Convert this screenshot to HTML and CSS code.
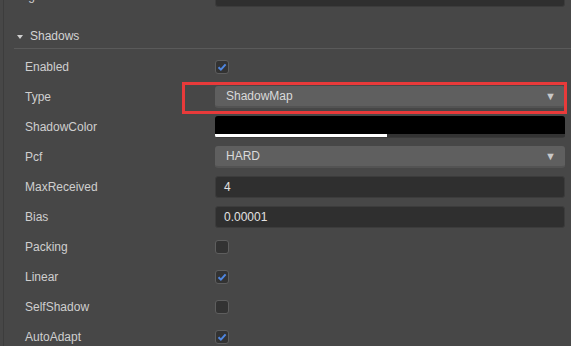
FILE: index.html
```html
<!DOCTYPE html>
<html lang="en">
<head>
    <meta charset="UTF-8">
    <title>Shadows</title>
    <link rel="stylesheet" href="styles.css">
</head>
<body>
    <div class="panel">
        <!-- 上一个属性（被裁切） -->
        <div class="row prev-row">
            <span class="label">Ignore</span>
            <div class="input"></div>
        </div>

        <div class="section-header">
            <span class="caret"></span>
            <span>Shadows</span>
        </div>

        <div class="rows">
            <div class="row">
                <span class="label">Enabled</span>
                <div class="checkbox checked">
                    <svg width="14" height="14" viewBox="0 0 14 14"><path d="M3.5 7.2 L5.9 9.6 L10.6 4.4" fill="none" stroke="#4f86e0" stroke-width="2"/></svg>
                </div>
            </div>
            <div class="row">
                <span class="label">Type</span>
                <div class="select"><span>ShadowMap</span><span class="arrow">▼</span></div>
                <div class="highlight"></div>
            </div>
            <div class="row">
                <span class="label">ShadowColor</span>
                <div class="color">
                    <div class="swatch"></div>
                    <div class="alpha"><div class="alpha-fill" style="width: 49%;"></div></div>
                </div>
            </div>
            <div class="row">
                <span class="label">Pcf</span>
                <div class="select"><span>HARD</span><span class="arrow">▼</span></div>
            </div>
            <div class="row">
                <span class="label">MaxReceived</span>
                <div class="input">4</div>
            </div>
            <div class="row">
                <span class="label">Bias</span>
                <div class="input">0.00001</div>
            </div>
            <div class="row">
                <span class="label">Packing</span>
                <div class="checkbox"></div>
            </div>
            <div class="row">
                <span class="label">Linear</span>
                <div class="checkbox checked">
                    <svg width="14" height="14" viewBox="0 0 14 14"><path d="M3.5 7.2 L5.9 9.6 L10.6 4.4" fill="none" stroke="#4f86e0" stroke-width="2"/></svg>
                </div>
            </div>
            <div class="row">
                <span class="label">SelfShadow</span>
                <div class="checkbox"></div>
            </div>
            <div class="row">
                <span class="label">AutoAdapt</span>
                <div class="checkbox checked">
                    <svg width="14" height="14" viewBox="0 0 14 14"><path d="M3.5 7.2 L5.9 9.6 L10.6 4.4" fill="none" stroke="#4f86e0" stroke-width="2"/></svg>
                </div>
            </div>
        </div>
    </div>
</body>
</html>
```

FILE: styles.css
```css
body {
    margin: 0;
    background-color: #474747;
    font-family: 'Liberation Sans', Arial, sans-serif;
    font-size: 12px;
    color: #cfcfcf;
    overflow: hidden;
}
.panel {
    margin-left: 3px;
    border-left: 1px solid #3d3d3d;
    min-height: 100vh;
}
.row {
    position: relative;
    display: flex;
    align-items: center;
    height: 30px;
    padding-left: 21px;
}
.prev-row {
    margin-top: -19px;
}
.label {
    width: 190px;
    flex-shrink: 0;
    line-height: 14px;
}
.section-header {
    display: flex;
    align-items: center;
    gap: 7px;
    height: 38px;
    box-sizing: border-box;
    margin-left: 10px;
    padding-left: 3px;
    padding-top: 13px;
    border-bottom: 1px solid #5a5a5a;
    color: #d4d4d4;
}
.caret {
    width: 0;
    height: 0;
    border-left: 3.5px solid transparent;
    border-right: 3.5px solid transparent;
    border-top: 4px solid #cfcfcf;
    margin-top: 1px;
}
.rows {
    padding-top: 3px;
}
.input {
    width: 350px;
    height: 22px;
    box-sizing: border-box;
    background-color: #2f2f2f;
    border: 1px solid #3c3c3c;
    border-radius: 3px;
    padding-left: 8px;
    line-height: 20px;
    color: #e2e2e2;
}
.select {
    display: flex;
    justify-content: space-between;
    align-items: center;
    width: 350px;
    height: 22px;
    box-sizing: border-box;
    background-color: #5f5f5f;
    border-bottom: 2px solid #535353;
    border-radius: 3px;
    padding: 0 9px 0 11px;
    color: #dadada;
}
.arrow {
    font-size: 11px;
    color: #c8c8c8;
}
.checkbox {
    width: 14px;
    height: 14px;
    box-sizing: border-box;
    background-color: #333333;
    border: 1px solid #5e5e5e;
    border-radius: 3px;
}
.checkbox svg {
    display: block;
    margin: -1px;
}
.color {
    width: 350px;
    height: 22px;
    background-color: #3a3a3a;
    border-radius: 3px;
    overflow: hidden;
}
.swatch {
    height: 18px;
    background-color: #000000;
}
.alpha {
    height: 3px;
    background-color: #333333;
}
.alpha-fill {
    height: 100%;
    background-color: #ffffff;
}
/* 标注用的红框 */
.highlight {
    position: absolute;
    left: 178px;
    top: 0;
    width: 385px;
    height: 32px;
    box-sizing: border-box;
    border: 3px solid #e83a3a;
}
```
